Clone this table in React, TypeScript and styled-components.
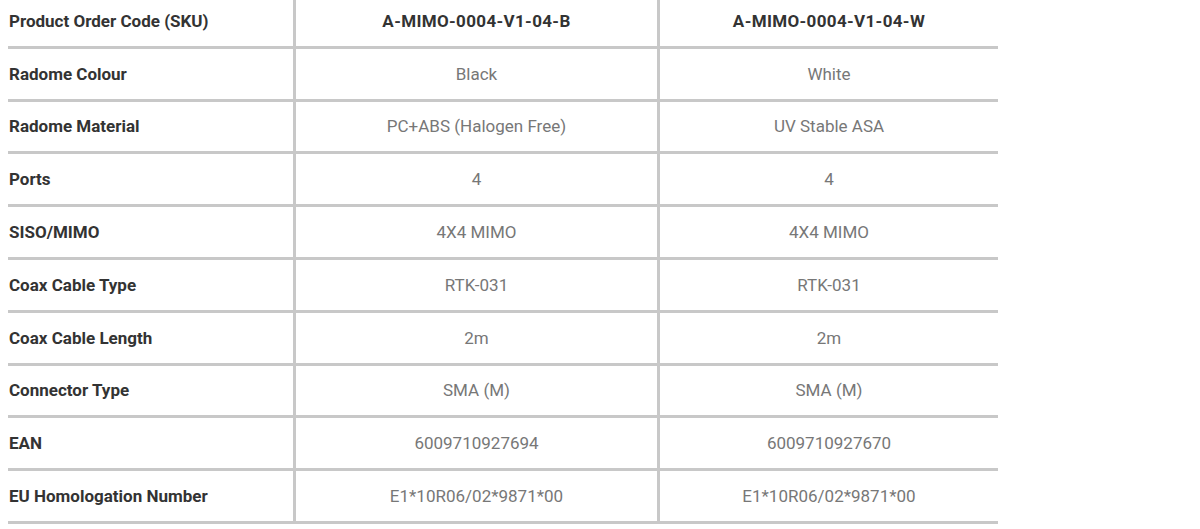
import React from 'react';
import styled, { createGlobalStyle } from 'styled-components';

const GlobalStyle = createGlobalStyle`
  body {
    margin: 0;
    background: #fff;
    font-family: Roboto, "Liberation Sans", Arial, sans-serif;
  }
`;

const Page = styled.div`
  padding: 0 8px;
  height: 529px;
  overflow: hidden;
`;

const Table = styled.table`
  width: 990px;
  margin-top: -4px;
  border-collapse: separate;
  border-spacing: 0;
  table-layout: fixed;
`;

const Row = styled.tr`
  height: 52.8px;
`;

const Cell = styled.td<{ $head?: boolean; $label?: boolean }>`
  box-sizing: border-box;
  border-bottom: 3px solid #c8c8c8;
  padding: 0 1px;
  font-size: 17px;
  line-height: 20px;
  vertical-align: middle;
  text-align: ${(p) => (p.$label ? 'left' : 'center')};
  font-weight: ${(p) => (p.$label || p.$head ? 700 : 400)};
  letter-spacing: ${(p) => (p.$head ? '0.35px' : '0')};
  color: ${(p) => (p.$label || p.$head ? '#333' : '#777')};

  &:not(:last-child) {
    border-right: 3px solid #c8c8c8;
  }
`;

const rows: [string, string, string][] = [
  ['Product Order Code (SKU)', 'A-MIMO-0004-V1-04-B', 'A-MIMO-0004-V1-04-W'],
  ['Radome Colour', 'Black', 'White'],
  ['Radome Material', 'PC+ABS (Halogen Free)', 'UV Stable ASA'],
  ['Ports', '4', '4'],
  ['SISO/MIMO', '4X4 MIMO', '4X4 MIMO'],
  ['Coax Cable Type', 'RTK-031', 'RTK-031'],
  ['Coax Cable Length', '2m', '2m'],
  ['Connector Type', 'SMA (M)', 'SMA (M)'],
  ['EAN', '6009710927694', '6009710927670'],
  ['EU Homologation Number', 'E1*10R06/02*9871*00', 'E1*10R06/02*9871*00'],
];

function App() {
  return (
    <Page>
      <GlobalStyle />
      <Table>
        <colgroup>
          <col style={{ width: 288 }} />
          <col style={{ width: 364 }} />
          <col style={{ width: 338 }} />
        </colgroup>
        <tbody>
          {rows.map(([label, a, b], i) => (
            <Row key={label}>
              <Cell $label>{label}</Cell>
              <Cell $head={i === 0}>{a}</Cell>
              <Cell $head={i === 0}>{b}</Cell>
            </Row>
          ))}
        </tbody>
      </Table>
    </Page>
  );
}

export default App;
